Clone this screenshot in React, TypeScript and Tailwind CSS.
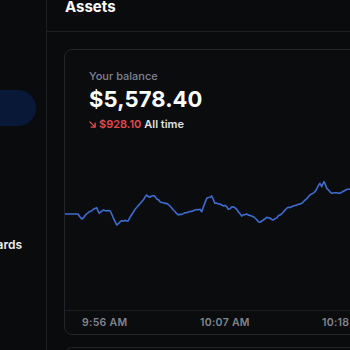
import React from "react";

const anchors: [number, number][] = [
  [65, 214], [78, 214], [81.7, 219], [88.3, 212.7], [96.7, 207.7], [99.3, 213.3],
  [103.3, 210], [110, 210.7], [116.7, 225], [121.7, 220.7], [128.3, 220.7],
  [135, 209.3], [141.7, 201.7], [146.7, 195], [150, 197.3], [154, 195.7],
  [160, 201.7], [166.7, 203.3], [170, 206], [178.3, 215], [185, 212.7],
  [193.3, 210.7], [200, 209.3], [201.7, 211.7], [206.7, 198.3], [211.7, 196],
  [215, 203.3], [220, 204], [226.7, 206.7], [228.3, 209.3], [233.3, 206.7],
  [236.7, 209.3], [241.7, 216], [246.7, 214], [251.7, 216], [260, 222.3],
  [266.7, 217.3], [273.3, 220], [280, 215], [286.7, 208.3], [293.3, 206],
  [301.7, 203.3], [308.3, 196.7], [315, 191.7], [320, 183.3], [321.7, 186.7],
  [324, 181.7], [326.7, 188.3], [331.7, 193.3], [338.3, 193.3], [346.7, 189.3],
  [352, 189.3], [365, 191], [380, 187], [400, 189], [430, 186],
];

function buildPath(): string {
  let seed = 11;
  const rand = () => {
    seed = (seed * 9301 + 49297) % 233280;
    return seed / 233280;
  };
  const pts: string[] = [];
  for (let i = 0; i < anchors.length - 1; i++) {
    const [x0, y0] = anchors[i];
    const [x1, y1] = anchors[i + 1];
    const steps = Math.max(1, Math.round((x1 - x0) / 1.6));
    for (let s = 0; s < steps; s++) {
      const t = s / steps;
      const x = x0 + (x1 - x0) * t - 65;
      const noise = i === 0 || s === 0 ? 0 : (rand() - 0.5) * 1.3;
      const y = y0 + (y1 - y0) * t + noise - 132;
      pts.push(`${x.toFixed(1)},${y.toFixed(1)}`);
    }
  }
  const last = anchors[anchors.length - 1];
  pts.push(`${(last[0] - 65).toFixed(1)},${(last[1] - 132).toFixed(1)}`);
  return "M" + pts.join(" L");
}

const path = buildPath();

export default function App() {
  return (
    <div className="w-[350px] h-[350px] overflow-hidden flex bg-[#0a0b0d] font-[Inter,sans-serif] text-white">
      {/* Sidebar */}
      <div className="w-[47px] shrink-0 border-r border-[#1d1f23] overflow-hidden flex flex-col pt-[90px]">
        <div className="ml-[-100px] w-[136px] h-9 rounded-full bg-[#0a1838] shrink-0" />
        <div className="mt-[111px] w-[22px] flex justify-end">
          <span className="whitespace-nowrap text-[12px] leading-4 font-semibold text-[#eef0f3]">
            Rewards
          </span>
        </div>
      </div>

      {/* Main */}
      <div className="flex-1 min-w-0 overflow-hidden flex flex-col">
        <div className="h-8 shrink-0 border-b border-[#1d1f23] px-[18px]">
          <div className="text-[15px] leading-none font-bold -mt-[1px]">Assets</div>
        </div>

        <div className="pl-[17px] pt-[17px]">
          <div className="w-[440px] rounded-lg border border-[#23252a] bg-[#0b0c0e]">
            <div className="px-6 pt-[18px]">
              <div className="text-[11px] leading-4 font-medium text-[#7d838f]">Your balance</div>
              <div className="mt-[1px] text-[22px] leading-7 font-bold tracking-[0.1px]">$5,578.40</div>
              <div className="mt-[3px] flex items-center h-4 text-[11px] font-semibold">
                <svg width="7" height="7" viewBox="0 0 8 8" className="mr-[3px]">
                  <path d="M1 1 L7 7 M7 2.5 L7 7 L2.5 7" stroke="#e5484d" strokeWidth="1.6" fill="none" strokeLinecap="round" strokeLinejoin="round" />
                </svg>
                <span className="text-[#e5484d]">$928.10</span>
                <span className="ml-[3px] text-[#dfe2e6]">All time</span>
              </div>
            </div>
            <svg width="440" height="178" className="block">
              <path d={path} fill="none" stroke="#3f6cd0" strokeWidth="1.6" strokeLinejoin="round" strokeLinecap="round" />
            </svg>
            <div className="border-t border-[#1d1f23] h-[24px] flex items-center pl-[17px] text-[10.5px] font-semibold text-[#80868f] tracking-[0.3px]">
              <span className="w-[118px] shrink-0">9:56 AM</span>
              <span className="w-[122px] shrink-0">10:07 AM</span>
              <span className="shrink-0">10:18 AM</span>
            </div>
          </div>
          <div className="mt-[12px] w-[440px] h-10 rounded-lg border border-[#23252a]" />
        </div>
      </div>
    </div>
  );
}
